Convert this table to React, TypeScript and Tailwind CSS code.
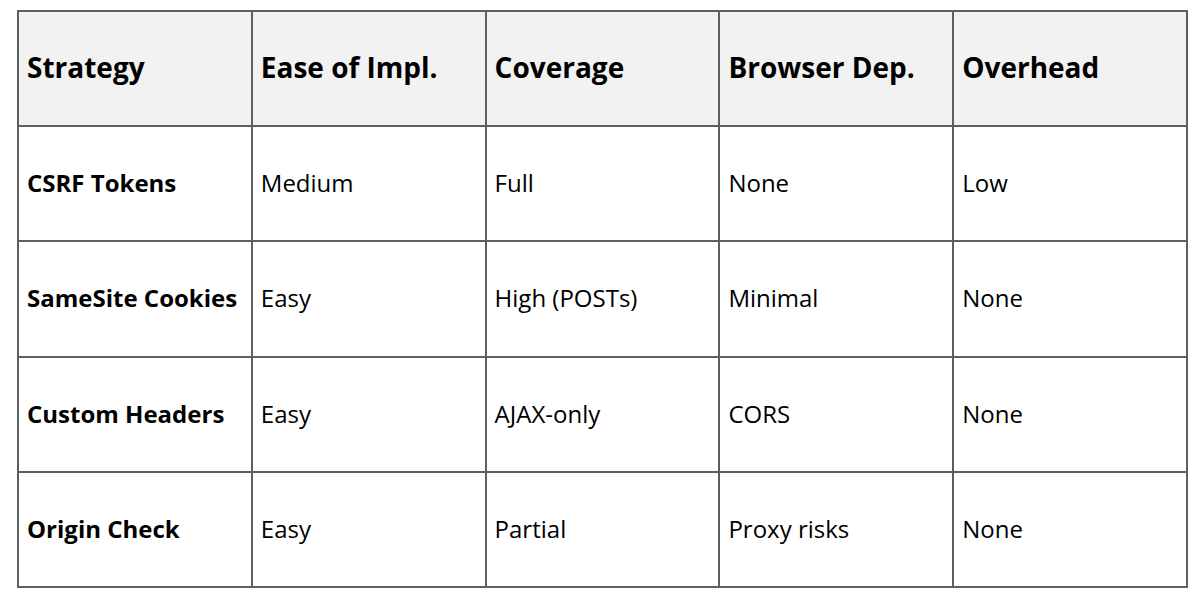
import React from "react";

const headers = ["Strategy", "Ease of Impl.", "Coverage", "Browser Dep.", "Overhead"];
const rows = [
  ["CSRF Tokens", "Medium", "Full", "None", "Low"],
  ["SameSite Cookies", "Easy", "High (POSTs)", "Minimal", "None"],
  ["Custom Headers", "Easy", "AJAX-only", "CORS", "None"],
  ["Origin Check", "Easy", "Partial", "Proxy risks", "None"],
];

export default function App() {
  return (
    <div
      className="w-[1200px] h-[600px] bg-white pl-[17px] pt-[10px]"
      style={{ fontFamily: '"Open Sans", sans-serif' }}
    >
      <div className="w-[1171px] grid grid-cols-5 grid-rows-5 h-[578px] border-l-2 border-t-2 border-[#5f5f5f]">
        {headers.map((h) => (
          <div
            key={h}
            className="bg-[#f2f2f2] border-r-2 border-b-2 border-[#5f5f5f] flex items-center pl-[8px] pb-[3px] text-[28px] font-bold text-black"
          >
            {h}
          </div>
        ))}
        {rows.map((r, ri) =>
          r.map((c, ci) => (
            <div
              key={ri + "-" + ci}
              className={
                "border-r-2 border-b-2 border-[#5f5f5f] flex items-center pl-[8px] pb-[1px] text-black text-[24px] " +
                (ci === 0 ? "font-bold" : "")
              }
            >
              {c}
            </div>
          ))
        )}
      </div>
    </div>
  );
}
